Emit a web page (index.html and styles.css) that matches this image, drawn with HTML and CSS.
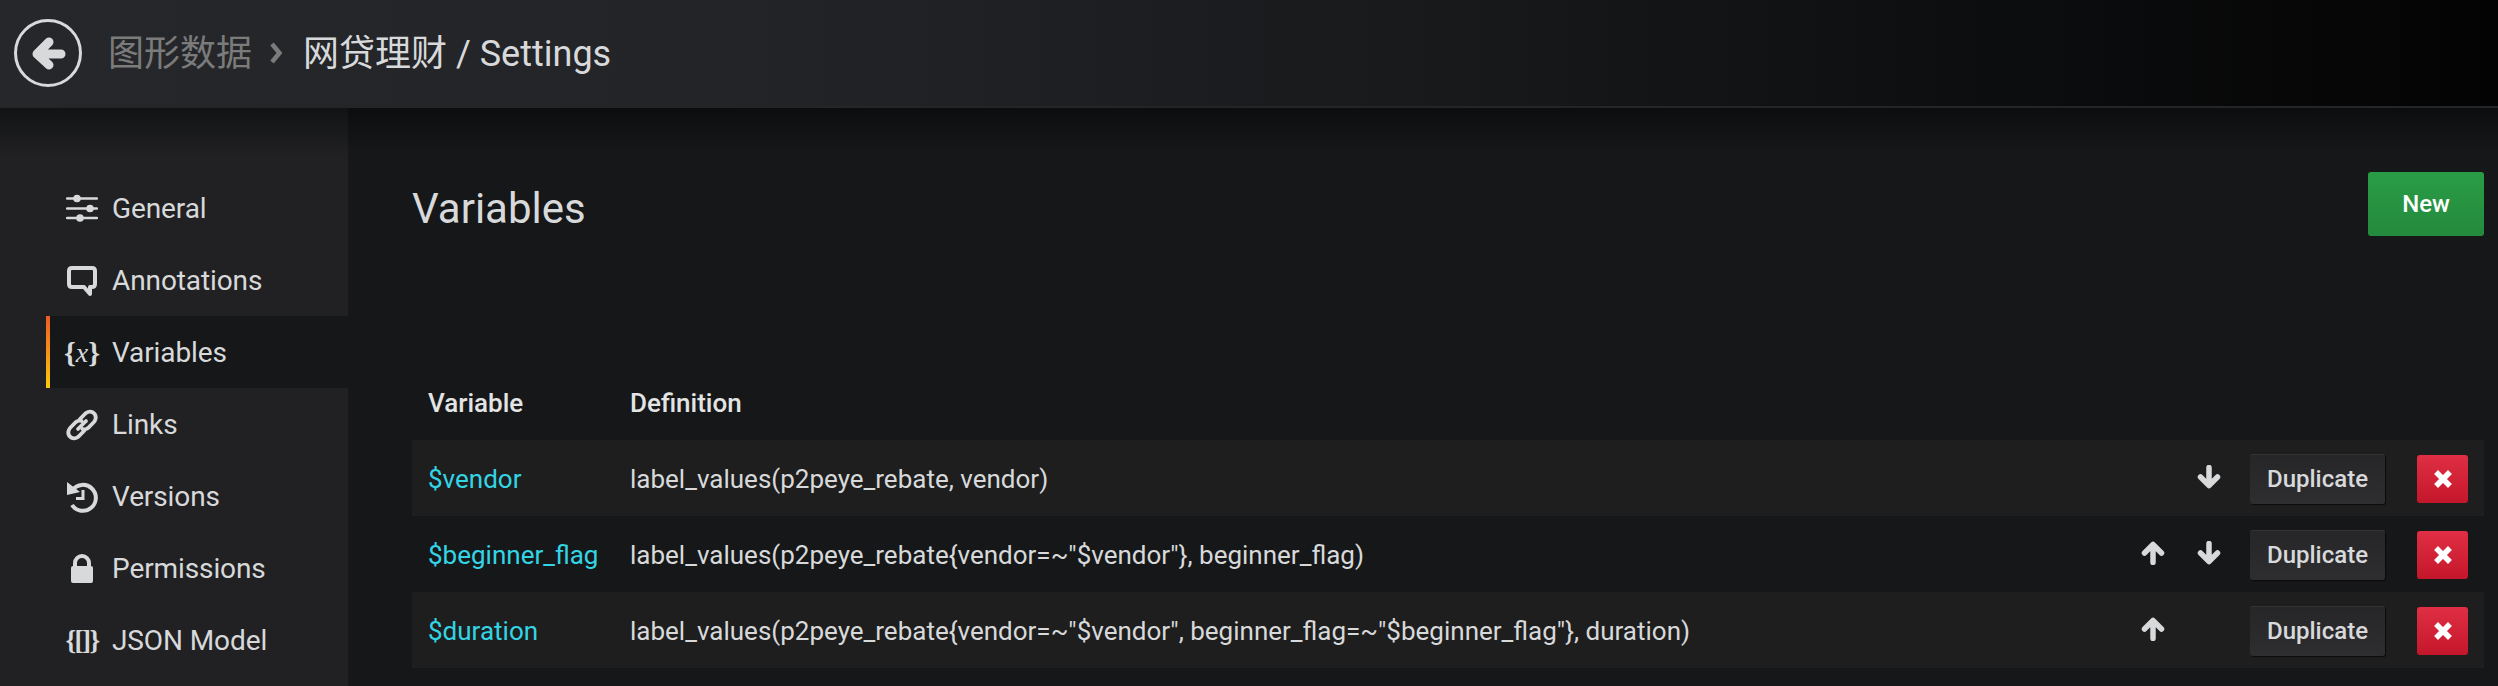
FILE: index.html
```html
<!DOCTYPE html>
<html lang="zh">
<head>
<meta charset="utf-8">
<title>Settings</title>
<link rel="stylesheet" href="styles.css">
</head>
<body>
<header class="topbar">
  <svg class="back" viewBox="0 0 68 68"><circle cx="34" cy="34" r="32.500" fill="none" stroke="#d8d9da" stroke-width="3"/><path d="M35 23 L23 35 L35 46 M25 35 H47" fill="none" stroke="#d8d9da" stroke-width="9" stroke-linecap="round" stroke-linejoin="round"/></svg>
  <span class="crumb-folder">图形数据</span>
  <svg class="chev" viewBox="0 0 12 22"><path d="M2 2 L9.500 11 L2 20" fill="none" stroke="#7b7b7b" stroke-width="4.500"/></svg>
  <span class="crumb-title">网贷理财 / Settings</span>
</header>
<div class="layout">
  <nav class="side">
    <a class="item"><svg class="ico" viewBox="0 0 32 32"><path d="M1 5.500H31M1 15.500H31M1 25H31" stroke="#d8d9da" stroke-width="2.500" stroke-linecap="round"/><circle cx="11" cy="5.500" r="3.800" fill="#d8d9da"/><circle cx="24" cy="15.500" r="3.800" fill="#d8d9da"/><circle cx="14" cy="25" r="3.800" fill="#d8d9da"/></svg><span>General</span></a>
    <a class="item"><svg class="ico" viewBox="0 0 32 32"><path d="M6 3H26Q29 3 29 6V19Q29 22 26 22H24V29L18 22H6Q3 22 3 19V6Q3 3 6 3Z" fill="none" stroke="#d8d9da" stroke-width="4" stroke-linejoin="round"/></svg><span>Annotations</span></a>
    <a class="item active"><span class="ico glyph"><span class="brace">{</span><i>x</i><span class="brace">}</span></span><span>Variables</span></a>
    <a class="item"><svg class="ico" viewBox="0 0 32 32"><g fill="none" stroke="#d8d9da" stroke-width="3.800" stroke-linecap="round"><path d="M12 20 L20 12"/><path d="M14 10 L20 4 Q23.500 1.500 27 3.500 Q30.500 6 29.500 10 Q29 12 27.500 13.500 L22 19 Q19.500 21 16.500 20"/><path d="M18 22 L12 28 Q8.500 30.500 5 28.500 Q1.500 26 2.500 22 Q3 20 4.500 18.500 L10 13 Q12.500 11 15.500 12"/></g></svg><span>Links</span></a>
    <a class="item"><svg class="ico" viewBox="0 0 32 32"><path d="M6.500 9 A13 13 0 1 1 6 24" fill="none" stroke="#d8d9da" stroke-width="4"/><path d="M1 1 L14 11 L1 14Z" fill="#d8d9da"/><path d="M17 9V17.500H10" fill="none" stroke="#d8d9da" stroke-width="3"/></svg><span>Versions</span></a>
    <a class="item"><svg class="ico" viewBox="0 0 32 32"><path d="M9 14V10A7 7 0 0 1 23 10V14" fill="none" stroke="#d8d9da" stroke-width="4"/><rect x="5" y="13" width="22" height="17" rx="2" fill="#d8d9da"/></svg><span>Permissions</span></a>
    <a class="item"><span class="ico glyph json">{[]}</span><span>JSON Model</span></a>
  </nav>
  <main class="content">
    <div class="head">
      <h1>Variables</h1>
      <button class="btn new">New</button>
    </div>
    <div class="table">
      <div class="thead"><span class="c-var">Variable</span><span class="c-def">Definition</span></div>
      <div class="row odd">
        <span class="c-var name">$vendor</span>
        <span class="c-def">label_values(p2peye_rebate, vendor)</span>
        <span class="arrow"></span>
        <span class="arrow"><svg class="ar" viewBox="0 0 24 24"><use href="#down"/></svg></span>
        <button class="btn dup">Duplicate</button>
        <button class="btn del"><svg class="x" viewBox="0 0 16 16"><use href="#cross"/></svg></button>
      </div>
      <div class="row">
        <span class="c-var name">$beginner_flag</span>
        <span class="c-def">label_values(p2peye_rebate{vendor=~"$vendor"}, beginner_flag)</span>
        <span class="arrow"><svg class="ar" viewBox="0 0 24 24"><use href="#up"/></svg></span>
        <span class="arrow"><svg class="ar" viewBox="0 0 24 24"><use href="#down"/></svg></span>
        <button class="btn dup">Duplicate</button>
        <button class="btn del"><svg class="x" viewBox="0 0 16 16"><use href="#cross"/></svg></button>
      </div>
      <div class="row odd">
        <span class="c-var name">$duration</span>
        <span class="c-def">label_values(p2peye_rebate{vendor=~"$vendor", beginner_flag=~"$beginner_flag"}, duration)</span>
        <span class="arrow"><svg class="ar" viewBox="0 0 24 24"><use href="#up"/></svg></span>
        <span class="arrow"></span>
        <button class="btn dup">Duplicate</button>
        <button class="btn del"><svg class="x" viewBox="0 0 16 16"><use href="#cross"/></svg></button>
      </div>
    </div>
  </main>
</div>
<svg class="defs" width="0" height="0">
  <defs>
    <g id="down"><path d="M12 2.500V19M3.500 12L12 20.500L20.500 12" fill="none" stroke="#d8d9da" stroke-width="5.500" stroke-linecap="round" stroke-linejoin="round"/></g>
    <g id="up"><path d="M12 21.500V5M3.500 12L12 3.500L20.500 12" fill="none" stroke="#d8d9da" stroke-width="5.500" stroke-linecap="round" stroke-linejoin="round"/></g>
    <g id="cross"><path d="M3 3L13 13M13 3L3 13" stroke="#fff" stroke-width="5.500" stroke-linecap="square"/></g>
  </defs>
</svg>
</body>
</html>
```
FILE: styles.css
```css
* { box-sizing: border-box; }
html, body { margin: 0; height: 100%; }
body {
  background: #161719;
  color: #d8d9da;
  font-family: Roboto, "Noto Sans CJK SC", sans-serif;
  font-size: 26px;
  overflow: hidden;
}
.topbar {
  height: 108px;
  display: flex;
  align-items: center;
  padding-left: 14px;
  background: linear-gradient(90deg, #26272b 0%, #232427 30%, #17181a 60%, #0f1012 75%, #030303 100%);
  border-bottom: 2px solid #242527;
}
.back { width: 68px; height: 68px; margin-right: 26px; flex: none; }
.crumb-folder { font-size: 36px; color: #7b7b7b; line-height: 44px; margin-top: 2px; }
.chev { width: 12px; height: 22px; margin: 0 21px 0 18px; }
.crumb-title { font-size: 36px; color: #d8d9da; line-height: 44px; margin-top: 2px; }
.layout { display: flex; height: 578px; }
.side {
  width: 348px;
  flex: none;
  padding-top: 64px;
  background: linear-gradient(180deg, #121315 0, #212124 50px);
}
.item {
  height: 72px;
  display: flex;
  align-items: center;
  padding-left: 20px;
  margin-left: 46px;
  padding-top: 1px;
  color: #d8d9da;
  font-size: 28px;
  letter-spacing: -0.1px;
  gap: 14px;
}
.item.active {
  background: #161719;
  position: relative;
}
.item.active::before {
  content: "";
  position: absolute;
  left: 0; top: 0; bottom: 0;
  width: 4px;
  background: linear-gradient(180deg, #f05a28, #fbca0a);
}
.ico { width: 32px; height: 32px; flex: none; }
.glyph { display: flex; align-items: center; justify-content: center; font-size: 30px; font-weight: 700; white-space: nowrap; letter-spacing: 0; }
.brace { font-family: "Liberation Serif", serif; font-weight: 700; }
.glyph i { font-family: "Liberation Serif", serif; font-size: 28px; font-weight: 400; }
.json { font-size: 27px; letter-spacing: -1.5px; font-family: "Liberation Serif", serif; }
.content { flex: 1; padding: 0 14px 0 64px; background: linear-gradient(180deg, #0c0d0f 0, #161719 44px); }
.head { display: flex; justify-content: space-between; align-items: flex-start; height: 260px; padding-top: 64px; }
h1 { margin: 0; font-size: 42px; font-weight: 400; line-height: 74px; color: #d8d9da; }
.btn { border: 0; font-family: Roboto, sans-serif; font-weight: 500; cursor: pointer; border-radius: 3px; }
.new { width: 116px; height: 64px; background: linear-gradient(180deg, #299c46, #248a3d); color: #fff; font-size: 24px; }
.thead { display: flex; height: 72px; align-items: center; font-weight: 500; font-size: 26px; color: #e3e4e4; padding-bottom: 2px; }
.c-var { width: 218px; padding-left: 16px; flex: none; }
.c-def { flex: 1; font-size: 26px; }
.row { display: flex; align-items: center; height: 76px; padding-right: 16px; padding-top: 2px; }
.row.odd { background: #1e1e1e; }
.name { color: #33d5e5; }
.arrow { width: 56px; flex: none; display: flex; justify-content: center; margin-top: -4px; }
.ar { width: 24px; height: 24px; }
.dup { width: 135px; height: 50px; margin-left: 13px; background: linear-gradient(180deg, #262628, #2e2e30); color: #d8d9da; font-size: 24px; box-shadow: 1px 1px 1px #0b0b0c, inset 0 1px #333436; }
.del { width: 51px; height: 48px; margin-left: 32px; background: linear-gradient(180deg, #e02f44, #c4162a); display: flex; align-items: center; justify-content: center; padding: 0; }
.x { width: 16px; height: 16px; overflow: visible; }
.defs { position: absolute; }
```
